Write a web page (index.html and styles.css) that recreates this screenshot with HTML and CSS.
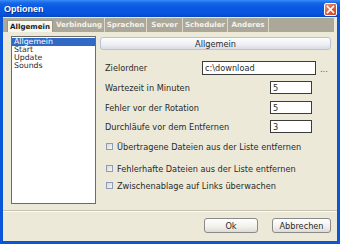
FILE: index.html
```html
<!DOCTYPE html>
<html>
<head>
<meta charset="utf-8">
<link rel="stylesheet" href="styles.css">
</head>
<body>
<div class="window">
  <div class="titlebar">
    <span class="title">Optionen</span>
    <span class="close"><svg width="9" height="9" viewBox="0 0 9 9"><path d="M1.5 1.5 L7.5 7.5 M7.5 1.5 L1.5 7.5" stroke="#fff" stroke-width="1.6" stroke-linecap="square"/></svg></span>
  </div>
  <div class="client">
    <div class="tabs">
      <span class="tab active">Allgemein</span>
      <span class="tab t-verbindung">Verbindung</span>
      <span class="tab t-sprachen">Sprachen</span>
      <span class="tab t-server">Server</span>
      <span class="tab t-scheduler">Scheduler</span>
      <span class="tab t-anderes">Anderes</span>
    </div>
    <div class="main">
      <ul class="list">
        <li class="sel">Allgemein</li>
        <li>Start</li>
        <li>Update</li>
        <li>Sounds</li>
      </ul>
      <div class="panel">
        <div class="header">Allgemein</div>
        <div class="row r1"><span class="label">Zielordner</span><span class="input wide">c:\download</span><span class="dots">...</span></div>
        <div class="row r2"><span class="label">Wartezeit in Minuten</span><span class="input small">5</span></div>
        <div class="row r3"><span class="label">Fehler vor der Rotation</span><span class="input small">5</span></div>
        <div class="row r4"><span class="label">Durchläufe vor dem Entfernen</span><span class="input small">3</span></div>
        <div class="check c1"><span class="box"></span>Übertragene Dateien aus der Liste entfernen</div>
        <div class="check c2"><span class="box"></span>Fehlerhafte Dateien aus der Liste entfernen</div>
        <div class="check c3"><span class="box"></span>Zwischenablage auf Links überwachen</div>
      </div>
    </div>
    <div class="footer">
      <span class="btn ok">Ok</span>
      <span class="btn cancel">Abbrechen</span>
    </div>
  </div>
</div>
</body>
</html>
```
FILE: styles.css
```css
html, body {
  margin: 0;
  padding: 0;
  width: 340px;
  height: 244px;
  overflow: hidden;
  background: #0b56d6;
}
.window {
  width: 340px;
  height: 244px;
  box-sizing: border-box;
  display: flex;
  flex-direction: column;
  background: #0b56d6;
  padding: 0 3px 3px 3px;
  font-family: "DejaVu Sans", Verdana, sans-serif;
  font-size: 8.2px;
  line-height: 10px;
  color: #2a2a2a;
}
.titlebar {
  height: 17px;
  margin: 0 -3px;
  padding: 0 3px 0 4px;
  display: flex;
  align-items: center;
  justify-content: space-between;
  background: linear-gradient(#3b8cf8 0%, #1466ea 18%, #0a58df 45%, #0656e3 75%, #0847c4 100%);
}
.title {
  color: #fff;
  font-weight: bold;
  font-family: "Liberation Sans", Arial, sans-serif;
  font-size: 9px;
  text-shadow: 1px 1px 0 #0a2f8a;
}
.close {
  width: 13px;
  height: 13px;
  box-sizing: border-box;
  border: 1px solid #fff;
  border-radius: 2px;
  background: linear-gradient(135deg, #f0957a 0%, #e06a45 40%, #c8431f 100%);
  display: flex;
  align-items: center;
  justify-content: center;
  margin-top: 1px;
}
.client {
  flex: 1;
  background: #ece9d8;
  display: flex;
  flex-direction: column;
}
.tabs {
  height: 14px;
  margin-top: 1px;
  margin-right: 3px;
  background: #aca899;
  display: flex;
  align-items: stretch;
  padding-left: 4px;
}
.tab {
  font-weight: bold;
  font-size: 7.1px;
  color: #f4f3ee;
  display: flex;
  align-items: center;
  justify-content: center;
  box-sizing: border-box;
  border-right: 1px solid #dcd9cb;
}
.tab.active {
  width: 46px;
  background: #f7f6f1;
  color: #1c1c1c;
  margin-top: 2px;
  border: 1px solid #9a9685;
  border-bottom: none;
  margin-right: 1px;
}
.t-verbindung { width: 51px; }
.t-sprachen { width: 42px; }
.t-server { width: 36px; }
.t-scheduler { width: 45px; }
.t-anderes { width: 41px; }
.main {
  display: flex;
  padding: 4px 0 0 8px;
  gap: 4px;
}
.list {
  margin: 0;
  padding: 1px 0 0 0;
  list-style: none;
  width: 85px;
  height: 168px;
  box-sizing: border-box;
  background: #fff;
  border: 1px solid #6b6b6b;
  font-size: 7.8px;
}
.list li {
  height: 8px;
  line-height: 8px;
  padding-left: 2px;
}
.list li.sel {
  background: #316ac5;
  color: #fff;
}
.panel {
  width: 231px;
  display: flex;
  flex-direction: column;
}
.header {
  margin-top: 1px;
  height: 13px;
  box-sizing: border-box;
  border: 1px solid #b9c3d3;
  border-radius: 3px;
  background: linear-gradient(#fdfdfd, #eceef3 60%, #d8dbe2);
  display: flex;
  align-items: center;
  justify-content: center;
}
.row {
  display: flex;
  align-items: center;
  height: 13px;
  padding-left: 5px;
}
.label {
  flex: 1;
}
.input {
  height: 100%;
  box-sizing: border-box;
  background: #fff;
  border: 1px solid #3c3c3c;
  display: flex;
  align-items: center;
  padding-left: 2px;
}
.r1 { margin-top: 11px; height: 14px; }
.r2 { margin-top: 6px; }
.r3 { margin-top: 7px; }
.r4 { margin-top: 6px; }
.wide { width: 114px; margin-right: 15px; }
.small { width: 42px; margin-right: 19px; }
.dots {
  position: absolute;
  left: 320px;
  top: 64px;
  color: #555;
}
.check {
  display: flex;
  align-items: center;
  height: 13px;
  padding-left: 6px;
  gap: 4px;
}
.c1 { margin-top: 7px; }
.c2 { margin-top: 9px; }
.c3 { margin-top: 4px; }
.box {
  width: 7px;
  height: 7px;
  box-sizing: border-box;
  border: 1px solid #8d9cb4;
  background: linear-gradient(135deg, #d9d8d2, #f6f6f4);
}
.footer {
  margin-top: 6px;
  border-top: 1px solid #c5c2b2;
  box-shadow: inset 0 1px 0 #fbfbf8;
  display: flex;
  justify-content: flex-end;
  padding: 7px 6px 0 0;
  gap: 14px;
}
.btn {
  height: 15px;
  box-sizing: border-box;
  border: 1px solid #8a8a8a;
  border-radius: 3px;
  background: linear-gradient(#ffffff, #f1f0ea 60%, #dedcd2);
  display: flex;
  align-items: center;
  justify-content: center;
}
.ok { width: 54px; }
.cancel { width: 59px; }
```
